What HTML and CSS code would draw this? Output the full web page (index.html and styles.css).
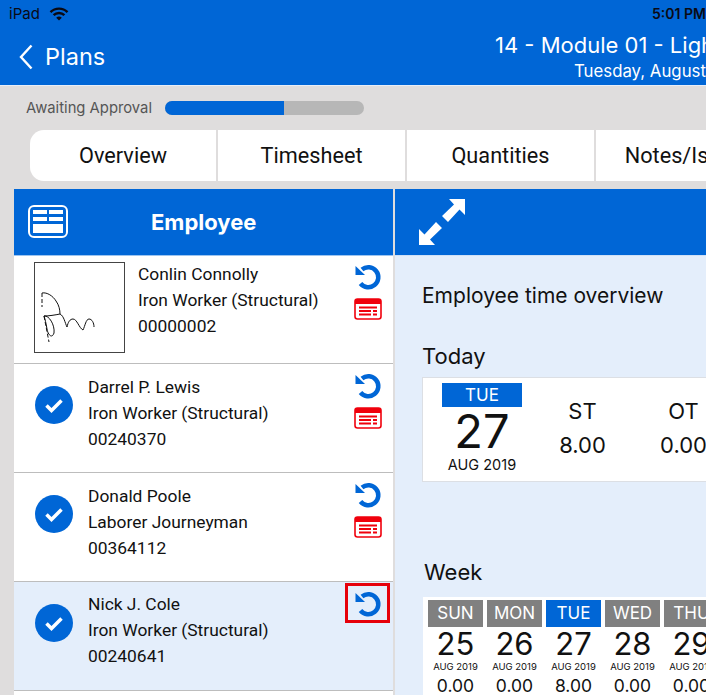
FILE: index.html
```html
<!DOCTYPE html>
<html lang="en">
<head>
<meta charset="utf-8">
<title>Employee time overview</title>
<link rel="stylesheet" href="styles.css">
</head>
<body>
<div class="app">
  <header class="appbar">
    <div class="status">
      <span class="carrier">iPad</span>
      <svg class="wifi" viewBox="0 0 20 14" width="20" height="14"><path d="M1.5 5.2a12 12 0 0 1 17 0M4.6 8.2a7.6 7.6 0 0 1 10.8 0" fill="none" stroke="#0a0a14" stroke-width="2.4"/><path d="M7.2 10.8a4 4 0 0 1 5.6 0L10 13.6z" fill="#0a0a14"/></svg>
      <span class="clock">5:01 PM</span>
    </div>
    <div class="nav">
      <svg class="chevron" viewBox="0 0 14 26" width="14" height="26"><path d="M12.5 1.5 2 13l10.5 11.5" fill="none" stroke="#fff" stroke-width="2.4"/></svg>
      <span class="back">Plans</span>
      <div class="titles">
        <div class="title">14 - Module 01 - Lighting</div>
        <div class="subtitle">Tuesday, August 27, 2019</div>
      </div>
    </div>
  </header>

  <div class="progress-row">
    <span class="progress-label">Awaiting Approval</span>
    <div class="progress"><div class="progress-fill"></div></div>
  </div>

  <nav class="tabs">
    <div class="tab tab-first">Overview</div>
    <div class="tab">Timesheet</div>
    <div class="tab">Quantities</div>
    <div class="tab">Notes/Issues</div>
  </nav>

  <main class="panels">
    <section class="left">
      <div class="left-head">
        <svg class="table-icon" viewBox="0 0 40 33" width="40" height="33">
          <rect x="1" y="1" width="38" height="31" rx="5" fill="none" stroke="#fff" stroke-width="2"/>
          <rect x="5" y="5" width="14" height="4" fill="#fff"/><rect x="21" y="5" width="14" height="4" fill="#fff"/>
          <rect x="5" y="12" width="14" height="4" fill="#fff"/><rect x="21" y="12" width="14" height="4" fill="#fff"/>
          <rect x="5" y="19" width="30" height="9" fill="#fff"/>
        </svg>
        <span class="left-title">Employee</span>
      </div>

      <article class="row row-sign">
        <div class="signature">
          <svg viewBox="0 0 90 90" width="90" height="90"><g fill="none" stroke="#111" stroke-width="1">
            <path d="M7 30C12 29 18 33 21 38C24 42 25 47 25 51C20 52 14 53 9 53"/>
            <path d="M9 53C14 52 20 62 19 70C17 76 13 72 12 66C11 60 10 56 9 53"/>
            <path d="M25 51C29 53 30 60 32 64C33 59 35 56 38 56C42 56 44 65 48 67C50 63 51 56 54 56C57 56 59 60 59 64"/>
            <path d="M7 30V44M9 53L14 79" stroke-dasharray="4 2"/>
          </g></svg>
        </div>
        <div class="info">
          <div>Conlin Connolly</div>
          <div>Iron Worker (Structural)</div>
          <div>00000002</div>
        </div>
        <div class="actions actions-first">
          <svg class="undo" viewBox="0 0 28 26" width="28" height="26"><path d="M8 5.500A10 10 0 1 1 6.500 19.500" fill="none" stroke="#0066d6" stroke-width="4.500"/><path d="M1.500 2v9h9.500z" fill="#0066d6"/></svg>
          <svg class="card-icon" viewBox="0 0 28 22" width="28" height="22"><rect x="1" y="1" width="26" height="20" rx="2.500" fill="#fff" stroke="#f0000c" stroke-width="1.600"/><rect x="1" y="1" width="26" height="5" fill="#f0000c"/><path d="M5 9.500h18M5 13h12M19 13h4M5 16.500h12M19 16.500h4" stroke="#f0000c" stroke-width="2"/></svg>
        </div>
      </article>

      <article class="row">
        <svg class="check" viewBox="0 0 38 38" width="38" height="38"><circle cx="19" cy="19" r="19" fill="#0066d6"/><path d="M11.500 19.500l5 5 10-10" fill="none" stroke="#fff" stroke-width="3.500"/></svg>
        <div class="info">
          <div>Darrel P. Lewis</div>
          <div>Iron Worker (Structural)</div>
          <div>00240370</div>
        </div>
        <div class="actions">
          <svg class="undo" viewBox="0 0 28 26" width="28" height="26"><path d="M8 5.500A10 10 0 1 1 6.500 19.500" fill="none" stroke="#0066d6" stroke-width="4.500"/><path d="M1.500 2v9h9.500z" fill="#0066d6"/></svg>
          <svg class="card-icon" viewBox="0 0 28 22" width="28" height="22"><rect x="1" y="1" width="26" height="20" rx="2.500" fill="#fff" stroke="#f0000c" stroke-width="1.600"/><rect x="1" y="1" width="26" height="5" fill="#f0000c"/><path d="M5 9.500h18M5 13h12M19 13h4M5 16.500h12M19 16.500h4" stroke="#f0000c" stroke-width="2"/></svg>
        </div>
      </article>

      <article class="row">
        <svg class="check" viewBox="0 0 38 38" width="38" height="38"><circle cx="19" cy="19" r="19" fill="#0066d6"/><path d="M11.500 19.500l5 5 10-10" fill="none" stroke="#fff" stroke-width="3.500"/></svg>
        <div class="info">
          <div>Donald Poole</div>
          <div>Laborer Journeyman</div>
          <div>00364112</div>
        </div>
        <div class="actions">
          <svg class="undo" viewBox="0 0 28 26" width="28" height="26"><path d="M8 5.500A10 10 0 1 1 6.500 19.500" fill="none" stroke="#0066d6" stroke-width="4.500"/><path d="M1.500 2v9h9.500z" fill="#0066d6"/></svg>
          <svg class="card-icon" viewBox="0 0 28 22" width="28" height="22"><rect x="1" y="1" width="26" height="20" rx="2.500" fill="#fff" stroke="#f0000c" stroke-width="1.600"/><rect x="1" y="1" width="26" height="5" fill="#f0000c"/><path d="M5 9.500h18M5 13h12M19 13h4M5 16.500h12M19 16.500h4" stroke="#f0000c" stroke-width="2"/></svg>
        </div>
      </article>

      <article class="row row-selected">
        <svg class="check" viewBox="0 0 38 38" width="38" height="38"><circle cx="19" cy="19" r="19" fill="#0066d6"/><path d="M11.500 19.500l5 5 10-10" fill="none" stroke="#fff" stroke-width="3.500"/></svg>
        <div class="info">
          <div>Nick J. Cole</div>
          <div>Iron Worker (Structural)</div>
          <div>00240641</div>
        </div>
        <div class="actions">
          <svg class="undo" viewBox="0 0 28 26" width="28" height="26"><path d="M8 5.500A10 10 0 1 1 6.500 19.500" fill="none" stroke="#0066d6" stroke-width="4.500"/><path d="M1.500 2v9h9.500z" fill="#0066d6"/></svg>
          <span class="highlight"></span>
        </div>
      </article>
      <article class="row"></article>
    </section>

    <section class="right">
      <div class="right-head">
        <svg class="expand" viewBox="0 0 46 46" width="46" height="46"><path d="M30 0H46V16L40.500 10.500 29 23 23 17 35 5.500zM16 46H0V30L5.500 35.500 17 23 23 29 11 40.500z" fill="#fff"/></svg>
      </div>
      <div class="right-body">
        <h1 class="overview">Employee time overview</h1>
        <h2 class="today-label">Today</h2>
        <div class="today">
          <div class="date">
            <div class="date-day">TUE</div>
            <div class="date-num">27</div>
            <div class="date-month">AUG 2019</div>
          </div>
          <div class="stat"><div>ST</div><div>8.00</div></div>
          <div class="stat"><div>OT</div><div>0.00</div></div>
        </div>
        <h2 class="week-label">Week</h2>
        <div class="week">
          <div class="day"><div class="day-name">SUN</div><div class="day-num">25</div><div class="day-month">AUG 2019</div><div class="day-val">0.00</div></div>
          <div class="day"><div class="day-name">MON</div><div class="day-num">26</div><div class="day-month">AUG 2019</div><div class="day-val">0.00</div></div>
          <div class="day"><div class="day-name day-now">TUE</div><div class="day-num">27</div><div class="day-month">AUG 2019</div><div class="day-val">8.00</div></div>
          <div class="day"><div class="day-name">WED</div><div class="day-num">28</div><div class="day-month">AUG 2019</div><div class="day-val">0.00</div></div>
          <div class="day"><div class="day-name">THU</div><div class="day-num">29</div><div class="day-month">AUG 2019</div><div class="day-val">0.00</div></div>
        </div>
      </div>
    </section>
  </main>
</div>
</body>
</html>
```

FILE: styles.css
```css
* { box-sizing: border-box; }
html, body { margin: 0; padding: 0; }
body { font-family: Roboto, "Liberation Sans", sans-serif; color: #111; background: #dfdddd; }

.app { width: 706px; height: 695px; overflow: hidden; display: flex; flex-direction: column; }

.appbar { height: 86px; flex: none; background: #0066d6; color: #fff; border-bottom: 1px solid #e8eef8; }
.status { height: 27px; display: flex; align-items: center; padding-left: 9px; color: #0a0a14; font-size: 14px; }
.carrier { font-family: Inter, sans-serif; font-size: 15px; }
.wifi { margin-left: 9px; }
.clock { margin-left: auto; margin-right: -10px; width: 64px; flex: none; font-family: Inter, sans-serif; font-weight: 600; font-size: 14px; white-space: nowrap; }
.nav { display: flex; height: 58px; }
.chevron { margin: 17px 0 0 19px; flex: none; }
.back { margin: 14px 0 0 12px; font-family: Inter, sans-serif; font-size: 23.500px; line-height: 32px; }
.titles { margin-left: auto; width: 211px; flex: none; overflow: hidden; white-space: nowrap; font-family: Inter, sans-serif; }
.title { font-size: 22px; line-height: 28px; margin-top: 4px; }
.subtitle { font-size: 16.800px; line-height: 20px; padding-left: 79px; margin-top: 2px; }

.progress-row { height: 44px; flex: none; display: flex; align-items: center; padding-left: 26px; }
.progress-label { width: 139px; font-family: Inter, sans-serif; font-size: 14.800px; color: #555; white-space: nowrap; }
.progress { width: 199px; height: 14px; background: #b7b7b7; border-radius: 7px; overflow: hidden; }
.progress-fill { width: 60%; height: 100%; background: #0066d6; }

.tabs { flex: none; height: 51px; display: flex; gap: 2px; margin-left: 30px; }
.tab { width: 187px; flex: none; background: #fff; display: flex; align-items: center; justify-content: center; font-size: 21.700px; white-space: nowrap; }
.tab-first { width: 186px; border-radius: 14px 0 0 14px; }

.panels { flex: 1; min-height: 0; margin: 8px 0 0 14px; display: flex; gap: 2px; }
.left { width: 379px; flex: none; background: #fff; }
.left-head { height: 67px; background: #0066d6; border-bottom: 1px solid #9cc4f0; color: #fff; display: flex; align-items: center; padding-left: 14px; }
.left-title { margin-left: 83px; font-size: 22px; font-weight: 700; font-family: Inter, sans-serif; }
.table-icon { flex: none; margin-top: -1px; }

.row { height: 109px; position: relative; display: flex; padding: 10px 0 0 21px; border-bottom: 1px solid #bdbdbd; }
.row-sign { height: 108px; padding: 5px 0 0 20px; }
.row-selected { background: #e4eefb; padding-top: 9px; }
.signature { width: 91px; height: 91px; flex: none; border: 1px solid #444; margin: 1px 13px 0 0; overflow: hidden; }
.signature svg { display: block; }
.check { flex: none; margin: 12px 15px 0 0; }
.row-selected .check { margin-top: 13px; }
.info { font-size: 17.400px; line-height: 26px; white-space: nowrap; }
.actions { margin-left: auto; margin-top: -1px; width: 54px; flex: none; position: relative; display: flex; flex-direction: column; gap: 8px; padding: 0 6px 0 15px; }
.actions-first { margin-top: 3px; }
.row-selected .actions { margin-top: 0; }
.highlight { position: absolute; left: 6px; top: -8px; width: 45px; height: 40px; border: 3px solid #e6000a; }

.right { flex: 1; min-width: 0; overflow: hidden; background: #e4eefb; }
.right-head { height: 67px; background: #0066d6; border-bottom: 1px solid #cfe0f6; padding: 10px 0 0 24px; }
.expand { display: block; }
.right-body { padding: 26px 0 0 27px; }
.overview { margin: 0; font-family: Inter, sans-serif; font-weight: 400; font-size: 21px; line-height: 28px; }
.today-label { margin: 32px 0 0; font-family: Inter, sans-serif; font-weight: 400; font-size: 22px; line-height: 28px; }
.today { margin-top: 7px; width: 320px; height: 105px; background: #fff; border: 1px solid #dcdfe4; display: flex; padding-left: 19px; font-family: Inter, sans-serif; }
.date { width: 80px; flex: none; text-align: center; padding-top: 5px; }
.date-day { height: 24px; background: #0066d6; color: #fff; font-size: 17px; line-height: 24px; }
.date-num { font-size: 47px; line-height: 48px; }
.date-month { font-size: 14.500px; line-height: 20px; }
.stat { width: 101px; flex: none; margin-left: 10px; margin-right: -10px; text-align: center; font-size: 22px; line-height: 34px; padding-top: 16px; }

.week-label { margin: 76px 0 0 2px; font-family: Inter, sans-serif; font-weight: 400; font-size: 22px; line-height: 28px; }
.week { margin: 11px 0 0 1px; width: 320px; height: 120px; background: #fff; display: flex; gap: 4px; padding: 3px 0 0 5px; font-family: Inter, sans-serif; text-align: center; }
.day { width: 55px; flex: none; }
.day-name { height: 27px; background: #808080; color: #fff; font-size: 17px; line-height: 27px; }
.day-now { background: #0066d6; }
.day-num { font-size: 31px; line-height: 34px; }
.day-month { font-size: 9.500px; line-height: 12px; }
.day-val { font-size: 17.500px; line-height: 24px; margin-top: 1px; }
```
